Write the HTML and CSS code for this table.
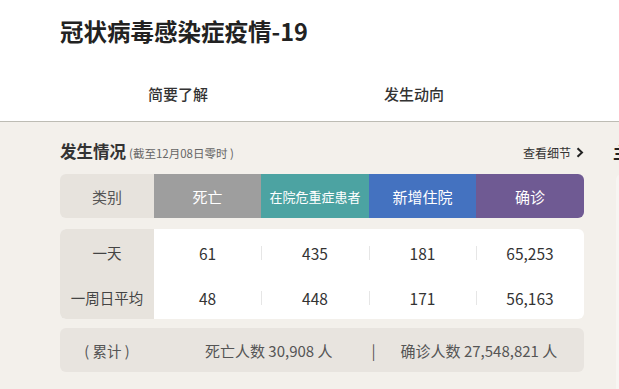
FILE: index.html
```html
<!DOCTYPE html>
<html lang="zh">
<head>
<meta charset="utf-8">
<link rel="stylesheet" href="styles.css">
</head>
<body>
<header class="top">
  <h1 class="title">冠状病毒感染症疫情-19</h1>
  <nav class="tabs">
    <a class="tab">简要了解</a>
    <a class="tab">发生动向</a>
    <a class="tab">预防</a>
  </nav>
</header>
<main class="content">
  <section class="status">
    <div class="status-head">
      <h2 class="status-title">发生情况<span class="status-sub">(截至12月08日零时 )</span></h2>
      <a class="more">查看细节<svg class="chev" width="8" height="11" viewBox="0 0 8 11"><path d="M1.5 1.2 L6 5.5 L1.5 9.8" fill="none" stroke="#222" stroke-width="2"/></svg></a>
    </div>
    <div class="grid head-row">
      <div class="cell c-type">类别</div>
      <div class="cell c-death">死亡</div>
      <div class="cell c-severe">在院危重症患者</div>
      <div class="cell c-hosp">新增住院</div>
      <div class="cell c-conf">确诊</div>
    </div>
    <div class="grid data">
      <div class="cell label">一天</div>
      <div class="cell num">61</div>
      <div class="cell num sep">435</div>
      <div class="cell num sep">181</div>
      <div class="cell num sep">65,253</div>
      <div class="cell label">一周日平均</div>
      <div class="cell num">48</div>
      <div class="cell num sep">448</div>
      <div class="cell num sep">171</div>
      <div class="cell num sep">56,163</div>
    </div>
    <div class="total">
      <div class="total-label">( 累计 )</div>
      <div class="total-body">
        <span class="t-death">死亡人数 30,908 人</span>
        <span class="t-bar">|</span>
        <span class="t-conf">确诊人数 27,548,821 人</span>
      </div>
    </div>
  </section>
  <aside class="side">
    <h2 class="side-title">主要指标</h2>
    <div class="side-panel"></div>
  </aside>
</main>
</body>
</html>
```
FILE: styles.css
```css
html, body {
  margin: 0;
  padding: 0;
}
body {
  font-family: "Noto Sans CJK SC", "Noto Sans", sans-serif;
  color: #333;
  background: #f3f0eb;
  width: 619px;
  height: 389px;
  overflow: hidden;
}
.top {
  background: #fff;
  border-bottom: 1px solid #bdbcb4;
  height: 122px;
  box-sizing: border-box;
  padding: 15px 0 0 60px;
}
.title {
  margin: 0;
  font-size: 23.5px;
  line-height: 32px;
  font-weight: 700;
  color: #222;
}
.tabs {
  display: flex;
  margin-top: 28px;
}
.tab {
  flex: 0 0 236px;
  text-align: center;
  font-size: 15px;
  line-height: 38px;
  color: #333;
  font-weight: 500;
}
.content {
  display: flex;
  padding: 18px 0 0 60px;
  gap: 29px;
}
.status {
  flex: 0 0 524px;
}
.status-head {
  display: flex;
  justify-content: space-between;
  align-items: center;
  height: 24px;
  margin-bottom: 10px;
}
.status-title {
  margin: 0;
  font-size: 16.5px;
  line-height: 24px;
  font-weight: 700;
  color: #333;
}
.status-sub {
  font-size: 11.5px;
  font-weight: 400;
  color: #666;
  margin-left: 3px;
}
.more {
  font-size: 12px;
  color: #333;
  display: flex;
  align-items: center;
  gap: 5px;
}
.chev {
  display: block;
}
.grid {
  display: grid;
  grid-template-columns: 94px 107px 108px 107px 108px;
  border-radius: 6px;
  overflow: hidden;
}
.cell {
  display: flex;
  align-items: center;
  justify-content: center;
}
.head-row .cell {
  height: 44px;
  font-size: 15px;
  color: #fff;
}
.head-row .c-type {
  background: #e7e3dd;
  color: #555;
}
.c-death { background: #9e9e9e; }
.c-severe { background: #4ca3a2; font-size: 13px !important; }
.c-hosp { background: #4472c0; }
.c-conf { background: #6f5a93; }
.data {
  margin-top: 11px;
  background: #fff;
}
.data .cell {
  height: 45px;
  padding-top: 2px;
  box-sizing: border-box;
}
.label {
  background: #e7e3dd;
  font-size: 14.5px;
  color: #444;
}
.num {
  font-size: 15.5px;
  color: #333;
  position: relative;
}
.sep::before {
  content: "";
  position: absolute;
  left: 0;
  top: 17px;
  width: 1px;
  height: 14px;
  background: #e6e6e6;
}
.total {
  margin-top: 9px;
  height: 44px;
  background: #e8e4df;
  border-radius: 6px;
  display: flex;
  align-items: center;
  font-size: 15px;
  color: #555;
}
.total-label {
  flex: 0 0 94px;
  text-align: center;
  font-size: 14.5px;
}
.total-body {
  display: flex;
  align-items: center;
  padding-left: 51px;
}
.t-bar {
  margin: 0 25px 0 39px;
}
.side {
  flex: 0 0 200px;
}
.side-title {
  margin: 0;
  font-size: 16.5px;
  line-height: 24px;
  font-weight: 700;
  color: #222;
  margin-bottom: 10px;
}
.side-panel {
  margin-left: 3px;
  height: 220px;
  background: #f7f5f2;
  border-radius: 6px;
}
```
